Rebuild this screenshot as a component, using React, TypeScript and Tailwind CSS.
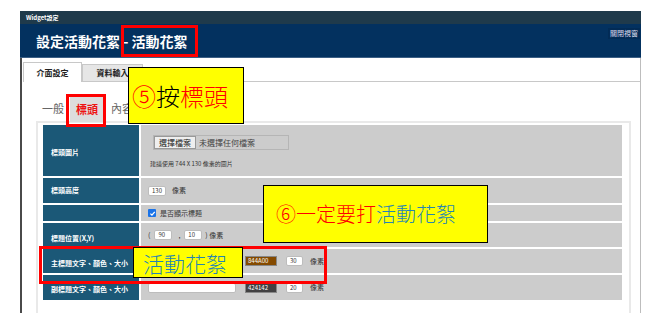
import React from 'react'

const font = "font-['Noto_Sans_CJK_TC','Noto_Sans',sans-serif]"

function Box({ w, children }: { w: string; children?: React.ReactNode }) {
  return (
    <span className={`${w} h-[10px] bg-white border border-[#bdbdbd] rounded-[2px] text-[6px] text-[#333] leading-[8px] pl-[3px]`}>
      {children}
    </span>
  )
}

function Chip({ bg, text }: { bg: string; text: string }) {
  return (
    <span className={`w-[32px] h-[10px] ${bg} border border-[#888] text-[6px] leading-[8px] text-white pl-[2px]`}>{text}</span>
  )
}

export default function App() {
  const label = 'text-[7px] font-bold text-white pl-[8px] flex items-center bg-[#1b5877]'
  const cell = 'bg-[#cccccc] flex items-center pl-[7px] text-[7px] text-[#333]'

  return (
    <div className={`relative w-[647px] h-[313px] bg-white overflow-hidden ${font}`}>
      <div className="ml-[20px] mt-[11px] w-[621px]">
        <div className="h-[13px] bg-[#1f3a4b] text-[6px] font-bold text-white pl-[6px] leading-[13px]">Widget設定</div>
        <div className="h-[34px] bg-[#03315f] border-b border-[#3c5f85] flex items-start justify-between">
          <div className="pl-[16px] pt-[8px] text-[14px] font-bold text-white leading-[18px]">設定活動花絮 - 活動花絮</div>
          <div className="mt-[4px] mr-[1px] px-[2px] py-[1px] bg-[#022b55] text-[7px] text-[#dde] leading-[9px]">關閉視窗</div>
        </div>

        <div className="h-[255px] border-l-2 border-[#4a4a4a] border-r border-r-[#bdbdbd]">
          <div className="pt-[4px] flex items-end h-[24px]">
            <div className="ml-[1px] w-[59px] h-[20px] bg-white border border-[#c8c8c8] border-b-0 text-[8px] font-bold text-[#222] flex items-center justify-center">介面設定</div>
            <div className="w-[61px] h-[18px] bg-[#e6e6e6] border border-[#c8c8c8] text-[8px] font-bold text-[#222] flex items-center justify-center">資料輸入</div>
            <div className="flex-1 h-[18px] border-b border-[#c8c8c8]"></div>
          </div>

          <div className="pl-[20px] mt-[15px] h-[24px] flex items-start">
            <span className="text-[11px] text-[#666] mt-[4px] leading-[14px]">一般</span>
            <span className="ml-[6px] w-[34px] h-[25px] bg-[#dddddd] text-[11px] font-bold text-[#ee1111] flex items-center justify-center">標頭</span>
            <span className="ml-[7px] text-[11px] text-[#666] mt-[4px] leading-[14px]">內容</span>
          </div>

          <div className="ml-[14px] w-[595px] h-[200px] border-2 border-[#e9e9e9] pt-[2px] pl-[5px]">
            <div className="grid grid-cols-[96px_481px] grid-rows-[51px_25px_16px_24px_24px_25px] gap-[2px]">
              <div className={label}><span className="pt-[4px]">標頭圖片</span></div>
              <div className="bg-[#cccccc] flex flex-col pl-[9px] pt-[10px]">
                <div className="ml-[3px] w-[136px] h-[15px] border border-[#b5b5b5] flex items-center">
                  <span className="h-[13px] px-[4px] bg-[#efefef] border border-[#999] text-[8px] text-[#222] leading-[11px]">選擇檔案</span>
                  <span className="ml-[3px] text-[8px] text-[#444]">未選擇任何檔案</span>
                </div>
                <div className="mt-[10px] text-[6px] text-[#333] leading-[7px]">建議使用 744 X 130 像素的圖片</div>
              </div>

              <div className={label}>標頭高度</div>
              <div className={`${cell} gap-[6px]`}>
                <Box w="w-[18px]">130</Box>
                <span>像素</span>
              </div>

              <div className="bg-[#1b5877]"></div>
              <div className={`${cell} gap-[4px]`}>
                <span className="w-[8px] h-[8px] bg-[#1a73e8] rounded-[1px] flex items-center justify-center">
                  <svg width="7" height="7" viewBox="0 0 10 10">
                    <path d="M2 5.2 L4.2 7.4 L8.2 2.6" stroke="white" strokeWidth="1.8" fill="none" />
                  </svg>
                </span>
                <span>是否顯示標題</span>
              </div>

              <div className={label}><span className="pt-[6px]">標題位置(X,Y)</span></div>
              <div className={`${cell} pl-[5px]`}>
                <span>(</span>
                <span className="ml-[4px] flex"><Box w="w-[18px]">90</Box></span>
                <span className="ml-[6px]">,</span>
                <span className="ml-[4px] flex"><Box w="w-[18px]">10</Box></span>
                <span className="ml-[3px]">) 像素</span>
              </div>

              <div className={label}><span className="pt-[4px]">主標題文字、顏色、大小</span></div>
              <div className={cell}>
                <Box w="w-[88px]"></Box>
                <span className="ml-[9px] flex"><Chip bg="bg-[#844a00]" text="844A00" /></span>
                <span className="ml-[9px] flex"><Box w="w-[17px]">30</Box></span>
                <span className="ml-[7px]">像素</span>
              </div>

              <div className={label}><span className="pt-[4px]">副標題文字、顏色、大小</span></div>
              <div className={cell}>
                <Box w="w-[88px]"></Box>
                <span className="ml-[9px] flex"><Chip bg="bg-[#424142]" text="424142" /></span>
                <span className="ml-[9px] flex"><Box w="w-[17px]">20</Box></span>
                <span className="ml-[7px]">像素</span>
              </div>
            </div>
          </div>
        </div>
      </div>

      {/* annotations */}
      <div className="absolute left-[121px] top-[25px] w-[77px] h-[32px] border-[3px] border-[#ff0000]"></div>
      <div className="absolute left-[66px] top-[94px] w-[40px] h-[33px] border-[3px] border-[#ff0000]"></div>
      <div className="absolute left-[128px] top-[67px] w-[116px] h-[57px] bg-[#ffff00] border border-black flex items-center pl-[3px] text-[24px] leading-[28px] font-light">
        <span className="text-[#ff0000]">⑤</span><span className="text-black">按</span><span className="text-[#ff0000]">標頭</span>
      </div>
      <div className="absolute left-[263px] top-[185px] w-[225px] h-[58px] bg-[#ffff00] border border-black flex items-center pl-[12px] text-[20px] leading-[24px] font-light">
        <span className="text-[#ff0000]">⑥一定要打</span><span className="text-[#2484b4]">活動花絮</span>
      </div>
      <div className="absolute left-[39px] top-[246px] w-[288px] h-[38px] border-[3px] border-[#ff0000]"></div>
      <div className="absolute left-[133px] top-[247px] w-[110px] h-[31px] bg-[#ffff00] border border-black flex items-center pl-[9px] text-[21px] leading-[24px] font-light text-[#2484b4]">
        活動花絮
      </div>
    </div>
  )
}
